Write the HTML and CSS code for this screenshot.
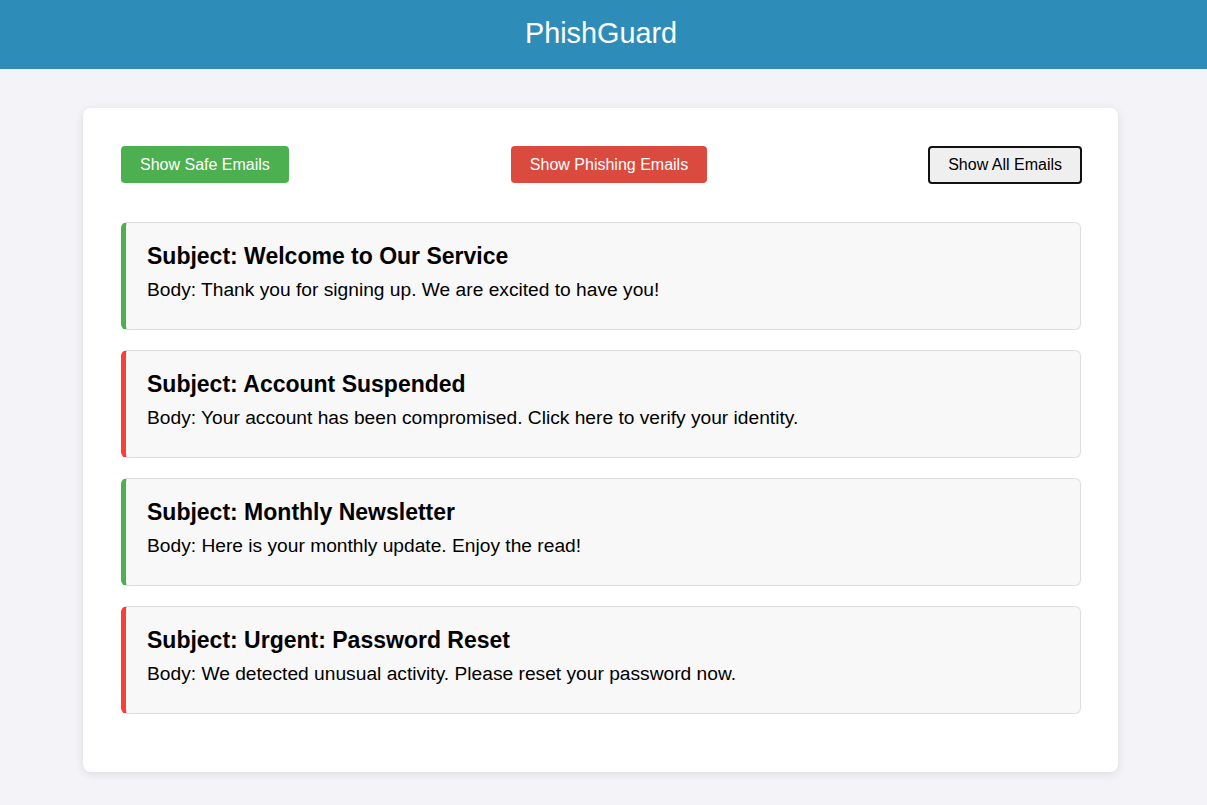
FILE: index.html
```html
<!DOCTYPE html>
<html lang="en">
<head>
<meta charset="utf-8">
<title>PhishGuard</title>
<link rel="stylesheet" href="styles.css">
</head>
<body>
<header class="site-header">
  <h1 class="site-title">PhishGuard</h1>
</header>
<main class="panel">
  <div class="filters">
    <button class="btn btn-safe">Show Safe Emails</button>
    <button class="btn btn-phish">Show Phishing Emails</button>
    <button class="btn btn-all">Show All Emails</button>
  </div>
  <div class="email-list">
    <article class="email safe">
      <h3 class="email-subject">Subject: Welcome to Our Service</h3>
      <p class="email-body">Body: Thank you for signing up. We are excited to have you!</p>
    </article>
    <article class="email phishing">
      <h3 class="email-subject">Subject: Account Suspended</h3>
      <p class="email-body">Body: Your account has been compromised. Click here to verify your identity.</p>
    </article>
    <article class="email safe">
      <h3 class="email-subject">Subject: Monthly Newsletter</h3>
      <p class="email-body">Body: Here is your monthly update. Enjoy the read!</p>
    </article>
    <article class="email phishing">
      <h3 class="email-subject">Subject: Urgent: Password Reset</h3>
      <p class="email-body">Body: We detected unusual activity. Please reset your password now.</p>
    </article>
  </div>
</main>
</body>
</html>
```
FILE: styles.css
```css
* { box-sizing: border-box; }
html, body { margin: 0; padding: 0; }
body {
  background: #f4f4f8;
  font-family: "Liberation Sans", Arial, sans-serif;
  color: #000;
}
.site-header {
  background: #2e8cb8;
  height: 69px;
  display: flex;
  align-items: center;
  justify-content: center;
  padding-right: 5px;
}
.site-title {
  margin: 0 0 3px;
  color: #fff;
  font-size: 28.8px;
  font-weight: normal;
}
.panel {
  width: 1035px;
  margin: 39px 0 34px 83px;
  background: #fff;
  border-radius: 8px;
  box-shadow: 0 2px 10px rgba(0, 0, 0, 0.1);
  padding: 38px 37px 58px 38px;
}
.filters {
  display: flex;
  justify-content: space-between;
  align-items: flex-start;
  margin-bottom: 38px;
}
.btn {
  font-family: "Liberation Sans", Arial, sans-serif;
  font-size: 16px;
  height: 37px;
  padding: 0 19px;
  border: none;
  border-radius: 4px;
  color: #fff;
  cursor: pointer;
}
.btn-safe { background: #4caf50; }
.btn-phish { background: #db4a3f; margin-left: 1px; }
.btn-all {
  background: #efefef;
  color: #000;
  border: 2px solid #111;
  padding: 0 18px;
  margin-right: -1px;
  height: 38px;
}
.email-list {
  display: flex;
  flex-direction: column;
  gap: 20px;
}
.email {
  background: #f8f8f8;
  border: 1px solid #ddd;
  border-left: 5px solid #4caf50;
  border-radius: 6px;
  padding: 20px 20px 28px 21px;
}
.email.phishing { border-left-color: #f44336; }
.email-subject {
  margin: 0 0 9px;
  font-size: 23px;
  font-weight: bold;
}
.email-body {
  margin: 0;
  font-size: 19.2px;
}
```
